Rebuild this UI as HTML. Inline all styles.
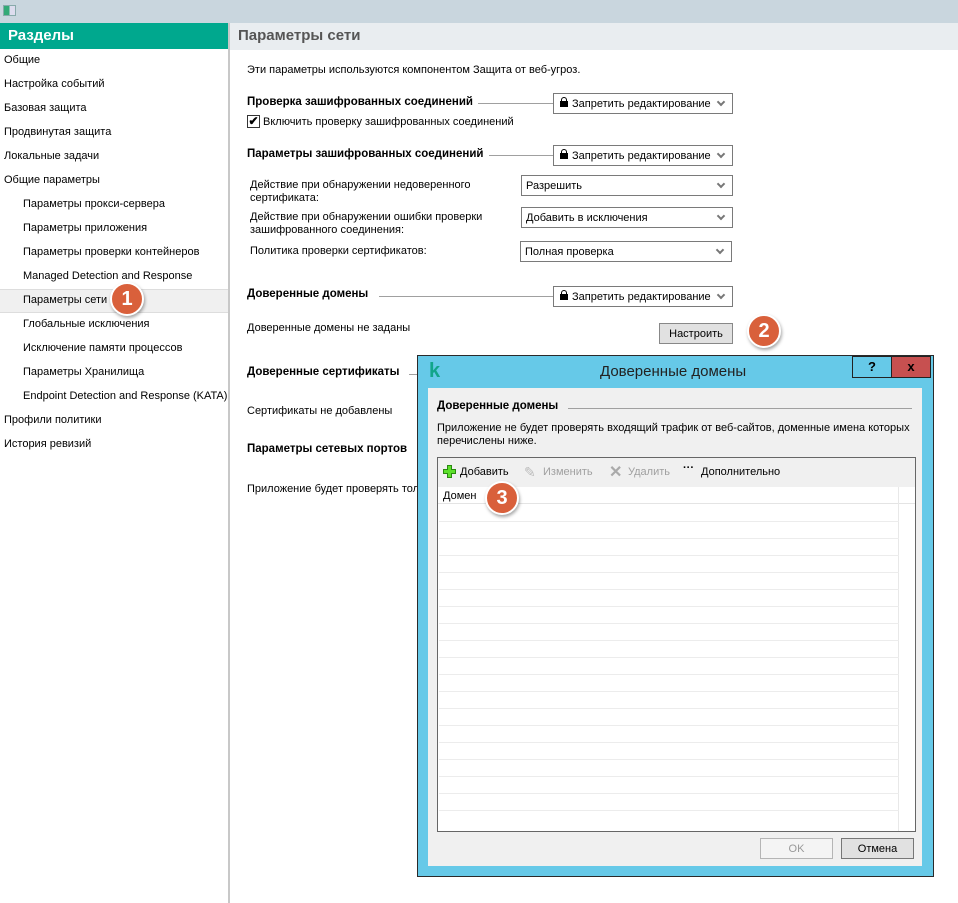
<!DOCTYPE html>
<html><head><meta charset="utf-8"><style>
*{margin:0;padding:0;box-sizing:border-box}
body{width:958px;height:903px;overflow:hidden;background:#fff;font-family:"Liberation Sans",sans-serif;font-size:11px;color:#000;position:relative}
.a{position:absolute;white-space:nowrap}
.b{font-weight:bold;font-size:11.5px}
.dd{position:absolute;border:1px solid #7a7a7a;background:#fff;height:21px;padding:4px 0 0 4px;font-size:11px}
.dd:after{content:"";position:absolute;right:8px;top:5px;width:4px;height:4px;border-right:2px solid #777;border-bottom:2px solid #777;transform:rotate(45deg)}
.lock{display:inline-block;width:8px;height:6px;background:#000;margin:0 4px 0 2px;position:relative;top:0px}
.lock:before{content:"";position:absolute;left:1px;top:-4px;width:4px;height:5px;border:1px solid #000;border-bottom:none;border-radius:3px 3px 0 0}
.hl{position:absolute;height:1px;background:#a0a0a0}
.circ{position:absolute;width:34px;height:34px;border-radius:50%;background:#d9603b;border:2px solid #fff;box-shadow:1px 2px 3px rgba(0,0,0,.35);color:#fff;font-weight:bold;font-size:20px;text-align:center;line-height:30px}
.row{position:absolute;left:1px;width:460px;height:1px;background:#ececec}
</style></head><body>
<div class="a" style="left:0;top:0;width:958px;height:23px;background:#c9d6de"></div>
<div class="a" style="left:3px;top:5px;width:13px;height:11px;border:1px solid #8aa;background:linear-gradient(90deg,#3a7 0 50%,#dde 50%)"></div>
<div class="a" style="left:0;top:23px;width:228px;height:26px;background:#00a88e;color:#fff;font-weight:bold;font-size:15px;padding:4px 8px">Разделы</div>
<div class="a" style="left:228px;top:23px;width:2px;height:880px;background:#c8c8c8"></div>
<div class="a" style="left:230px;top:23px;width:728px;height:27px;background:#e9edf0;color:#555;font-weight:bold;font-size:15px;padding:4px 8px">Параметры сети</div>
<div class="a" style="left:0;top:289px;width:228px;height:24px;background:#f0f0f0;border-top:1px solid #ddd;border-bottom:1px solid #ddd"></div>
<div class="a" style="left:4px;top:54px">Общие</div>
<div class="a" style="left:4px;top:78px">Настройка событий</div>
<div class="a" style="left:4px;top:102px">Базовая защита</div>
<div class="a" style="left:4px;top:126px">Продвинутая защита</div>
<div class="a" style="left:4px;top:150px">Локальные задачи</div>
<div class="a" style="left:4px;top:174px">Общие параметры</div>
<div class="a" style="left:23px;top:198px">Параметры прокси-сервера</div>
<div class="a" style="left:23px;top:222px">Параметры приложения</div>
<div class="a" style="left:23px;top:246px">Параметры проверки контейнеров</div>
<div class="a" style="left:23px;top:270px">Managed Detection and Response</div>
<div class="a" style="left:23px;top:294px">Параметры сети</div>
<div class="a" style="left:23px;top:318px">Глобальные исключения</div>
<div class="a" style="left:23px;top:342px">Исключение памяти процессов</div>
<div class="a" style="left:23px;top:366px">Параметры Хранилища</div>
<div class="a" style="left:23px;top:390px">Endpoint Detection and Response (KATA)</div>
<div class="a" style="left:4px;top:414px">Профили политики</div>
<div class="a" style="left:4px;top:438px">История ревизий</div>

<div class="a" style="left:247px;top:64px">Эти параметры используются компонентом Защита от веб-угроз.</div>
<div class="a b" style="left:247px;top:96px">Проверка зашифрованных соединений</div>
<div class="hl" style="left:478px;top:103px;width:75px"></div>
<div class="dd" style="left:553px;top:93px;width:180px"><span class="lock"></span>Запретить редактирование</div>
<div class="a" style="left:247px;top:115px;width:13px;height:13px;border:1px solid #333;background:#fff;font-size:12px;line-height:11px;text-align:center;font-weight:bold">✔</div>
<div class="a" style="left:263px;top:116px">Включить проверку зашифрованных соединений</div>
<div class="a b" style="left:247px;top:148px">Параметры зашифрованных соединений</div>
<div class="hl" style="left:489px;top:155px;width:64px"></div>
<div class="dd" style="left:553px;top:145px;width:180px"><span class="lock"></span>Запретить редактирование</div>
<div class="a" style="left:250px;top:179px;line-height:13px">Действие при обнаружении недоверенного<br>сертификата:</div>
<div class="dd" style="left:521px;top:175px;width:212px">Разрешить</div>
<div class="a" style="left:250px;top:211px;line-height:13px">Действие при обнаружении ошибки проверки<br>зашифрованного соединения:</div>
<div class="dd" style="left:521px;top:207px;width:212px">Добавить в исключения</div>
<div class="a" style="left:250px;top:245px">Политика проверки сертификатов:</div>
<div class="dd" style="left:520px;top:241px;width:212px">Полная проверка</div>
<div class="a b" style="left:247px;top:288px">Доверенные домены</div>
<div class="hl" style="left:379px;top:296px;width:174px"></div>
<div class="dd" style="left:553px;top:286px;width:180px"><span class="lock"></span>Запретить редактирование</div>
<div class="a" style="left:247px;top:322px">Доверенные домены не заданы</div>
<div class="a" style="left:659px;top:323px;width:74px;height:21px;border:1px solid #888;background:#e1e1e1;text-align:center;padding-top:4px">Настроить</div>
<div class="a b" style="left:247px;top:366px">Доверенные сертификаты</div>
<div class="hl" style="left:409px;top:374px;width:10px"></div>
<div class="a" style="left:247px;top:405px">Сертификаты не добавлены</div>
<div class="a b" style="left:247px;top:443px">Параметры сетевых портов</div>
<div class="a" style="left:247px;top:483px;width:170px;overflow:hidden">Приложение будет проверять только</div>

<div class="a" style="left:417px;top:355px;width:517px;height:522px;background:#66c9e8;border:1px solid #2a2a2a"></div>
<div class="a" style="left:429px;top:359px;color:#12a58a;font-weight:bold;font-size:20px;line-height:24px">k</div>
<div class="a" style="left:600px;top:363px;font-size:15px;color:#222">Доверенные домены</div>
<div class="a" style="left:852px;top:356px;width:40px;height:22px;border:1px solid #222;background:#66c9e8;text-align:center;font-weight:bold;font-size:13px;line-height:19px">?</div>
<div class="a" style="left:891px;top:356px;width:40px;height:22px;background:#c75050;border:1px solid #222;text-align:center;font-weight:bold;font-size:13px;line-height:19px">x</div>
<div class="a" style="left:428px;top:388px;width:494px;height:478px;background:#f0f0f0"></div>
<div class="a b" style="left:437px;top:400px">Доверенные домены</div>
<div class="hl" style="left:568px;top:408px;width:344px"></div>
<div class="a" style="left:437px;top:422px;line-height:13px">Приложение не будет проверять входящий трафик от веб-сайтов, доменные имена которых<br>перечислены ниже.</div>
<div class="a" style="left:437px;top:457px;width:479px;height:375px;border:1px solid #666;background:#fff;overflow:hidden">
 <div class="a" style="left:0;top:0;width:477px;height:29px;background:#f0f0f0"></div>
 <div class="a" style="left:5px;top:7px;width:13px;height:13px"><svg width="13" height="13"><path d="M4.5 .5h4v4h4v4h-4v4h-4v-4h-4v-4h4z" fill="#5ce02a" stroke="#2a8a10"/></svg></div>
 <div class="a" style="left:22px;top:8px">Добавить</div>
 <div class="a" style="left:86px;top:6px;color:#bbb;font-size:14px">✎</div>
 <div class="a" style="left:105px;top:8px;color:#a0a0a0">Изменить</div>
 <div class="a" style="left:171px;top:4px;color:#aaa;font-size:16px;font-weight:bold">✕</div>
 <div class="a" style="left:190px;top:8px;color:#a0a0a0">Удалить</div>
 <div class="a" style="left:245px;top:4px;font-weight:bold">···</div>
 <div class="a" style="left:263px;top:8px">Дополнительно</div>
 <div class="a" style="left:0;top:29px;width:477px;height:17px;border-bottom:1px solid #e4e4e4"></div>
 <div class="a" style="left:5px;top:32px">Домен</div>
 <div class="a" style="left:460px;top:29px;width:1px;height:345px;background:#e8e8e8"></div>
 <div class="row" style="top:63px"></div><div class="row" style="top:80px"></div><div class="row" style="top:97px"></div><div class="row" style="top:114px"></div><div class="row" style="top:131px"></div><div class="row" style="top:148px"></div><div class="row" style="top:165px"></div><div class="row" style="top:182px"></div><div class="row" style="top:199px"></div><div class="row" style="top:216px"></div><div class="row" style="top:233px"></div><div class="row" style="top:250px"></div><div class="row" style="top:267px"></div><div class="row" style="top:284px"></div><div class="row" style="top:301px"></div><div class="row" style="top:318px"></div><div class="row" style="top:335px"></div><div class="row" style="top:352px"></div>
</div>
<div class="a" style="left:760px;top:838px;width:73px;height:21px;border:1px solid #b5b5b5;background:#f4f4f4;color:#999;text-align:center;padding-top:4px">OK</div>
<div class="a" style="left:841px;top:838px;width:73px;height:21px;border:1px solid #777;background:#e1e1e1;text-align:center;padding-top:4px">Отмена</div>

<div class="circ" style="left:110px;top:282px">1</div>
<div class="circ" style="left:747px;top:314px">2</div>
<div class="circ" style="left:485px;top:481px">3</div>
</body></html>
